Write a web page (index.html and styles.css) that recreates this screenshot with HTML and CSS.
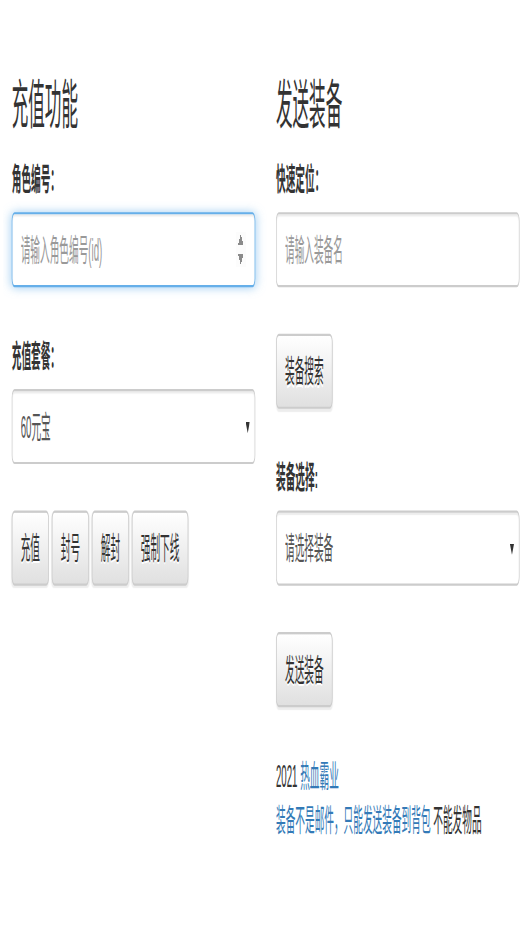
FILE: index.html
```html
<!DOCTYPE html>
<html lang="zh-CN">
<head>
  <meta charset="UTF-8">
  <title>GM 工具</title>
  <link rel="stylesheet" href="styles.css">
</head>
<body>
  <!-- The page is laid out at its natural size, then stretched like the capture -->
  <div class="page">
    <!-- Recharge panel -->
    <div class="panel">
      <h3>充值功能</h3>
      <div class="field">
        <label for="roleId">角色编号：</label>
        <input type="number" id="roleId" class="form-control is-focus" placeholder="请输入角色编号(id)">
      </div>
      <div class="field">
        <label for="pack">充值套餐：</label>
        <select id="pack" class="form-control">
          <option>60元宝</option>
        </select>
      </div>
      <div class="btn-row">
        <button class="btn">充值</button>
        <button class="btn">封号</button>
        <button class="btn">解封</button>
        <button class="btn">强制下线</button>
      </div>
    </div>

    <!-- Send equipment panel -->
    <div class="panel">
      <h3>发送装备</h3>
      <div class="field">
        <label for="equipName">快速定位：</label>
        <input type="text" id="equipName" class="form-control" placeholder="请输入装备名">
      </div>
      <div class="field">
        <button class="btn">装备搜索</button>
      </div>
      <div class="field">
        <label for="equip">装备选择:</label>
        <select id="equip" class="form-control">
          <option>请选择装备</option>
        </select>
      </div>
      <div class="field">
        <button class="btn">发送装备</button>
      </div>
      <p class="note">
        2021 <a href="#">热血霸业</a><br>
        <a href="#">装备不是邮件，只能发送装备到背包</a> 不能发物品
      </p>
    </div>
  </div>
</body>
</html>
```

FILE: styles.css
```css
/* Global */
html {
  overflow: hidden;
}

body {
  margin: 0;
  min-height: 939px;
  background-color: #fff;
  color: #333;
  font-family: "Liberation Sans", "Noto Sans CJK SC", sans-serif;
  font-size: 14px;
  line-height: 20px;
}

/* Two columns, stretched to the capture's proportions */
.page {
  width: 770px;
  box-sizing: border-box;
  padding: 15px 17px 0;
  display: grid;
  grid-template-columns: 1fr 1fr;
  column-gap: 30px;
  align-items: start;
  transform: scale(0.69, 2.21);
  transform-origin: 0 0;
}

h3 {
  margin: 20px 0 10px;
  font-size: 24px;
  font-weight: 400;
  line-height: 1.1;
}

/* Form fields */
.field {
  margin-bottom: 21px;
}

.field label {
  display: block;
  margin-bottom: 5px;
  font-weight: bold;
}

.form-control {
  display: block;
  width: 100%;
  height: 34px;
  box-sizing: border-box;
  padding: 6px 12px;
  font-family: inherit;
  font-size: 14px;
  line-height: 20px;
  color: #555;
  background-color: #fff;
  border: 1px solid #ccc;
  border-radius: 4px;
  box-shadow: inset 0 1px 1px rgba(0, 0, 0, 0.075);
  outline: none;
}

.form-control::placeholder {
  color: #999;
}

.form-control.is-focus {
  border-color: #66afe9;
  box-shadow: inset 0 1px 1px rgba(0, 0, 0, 0.075), 0 0 8px rgba(102, 175, 233, 0.6);
}

input[type=number]::-webkit-inner-spin-button {
  opacity: 1;
}

select.form-control {
  appearance: none;
  -webkit-appearance: none;
  background-image: url("data:image/svg+xml,%3Csvg xmlns='http://www.w3.org/2000/svg' width='6' height='5'%3E%3Cpath d='M0 0h6L3 5z' fill='%23333'/%3E%3C/svg%3E");
  background-repeat: no-repeat;
  background-position: right 7px center;
  background-size: 6px 5px;
}

/* Buttons */
.btn-row {
  display: flex;
  gap: 4px;
}

.btn {
  display: inline-block;
  height: 34px;
  padding: 6px 12px;
  font-family: inherit;
  font-size: 14px;
  line-height: 20px;
  color: #333;
  background-color: #e0e0e0;
  background-image: linear-gradient(to bottom, #fff 0, #e0e0e0 100%);
  border: 1px solid #ccc;
  border-radius: 4px;
  text-shadow: 0 1px 0 #fff;
  box-shadow: inset 0 1px 0 rgba(255, 255, 255, 0.15), 0 1px 1px rgba(0, 0, 0, 0.075);
  cursor: pointer;
}

/* Footer note */
.note {
  margin: 0;
}

.note a {
  color: #337ab7;
  text-decoration: none;
}
```
